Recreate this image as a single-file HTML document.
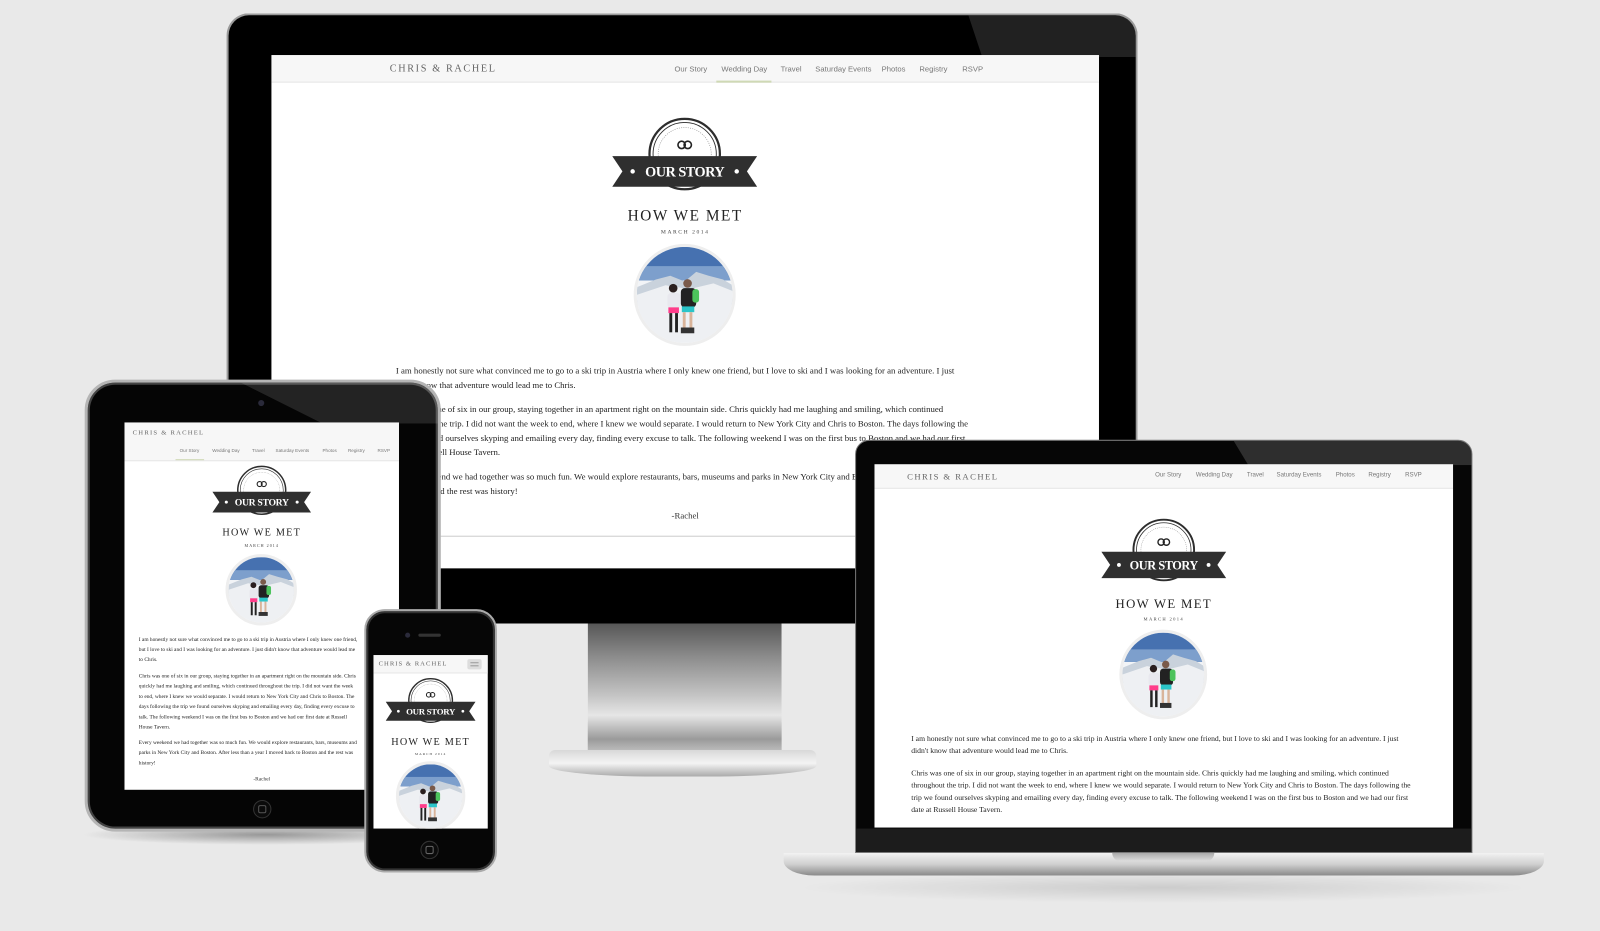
<!DOCTYPE html>
<html><head><meta charset="utf-8"><style>
*{margin:0;padding:0;box-sizing:border-box}
body{width:1600px;height:930px;background:#e9e9e9;position:relative;overflow:hidden;font-family:"Liberation Serif",serif;color:#333}
#w{position:absolute;left:0;top:0;width:1568px;height:912px;transform:scale(1.0204);transform-origin:0 0}
.a{position:absolute}
.scr{position:absolute;background:#fff;overflow:hidden}
.hdr{position:absolute;left:0;top:0;right:0;background:#f7f7f7;border-bottom:1px solid #e6e6e6}
.logo{position:absolute;font-family:"Liberation Serif",serif;color:#666;white-space:nowrap}
.nav{position:absolute;font-family:"Liberation Sans",sans-serif;color:#777;white-space:nowrap}
.t{position:absolute;white-space:nowrap;text-align:center}
.p{position:absolute;white-space:nowrap;color:#222}
.ph{position:absolute;border-radius:50%;overflow:hidden;border:3px solid #eee;background:#fff}
.ph svg{width:100%;height:100%;display:block}
</style></head><body><div id="w">

<div class="a" style="left:80px;top:808px;width:360px;height:20px;background:radial-gradient(ellipse at center,rgba(0,0,0,.35),rgba(0,0,0,0) 70%)"></div>
<div class="a" style="left:780px;top:855px;width:720px;height:30px;background:radial-gradient(ellipse at center,rgba(0,0,0,.12),rgba(0,0,0,0) 70%)"></div>

<!-- MONITOR -->
<div class="a" style="left:576px;top:610px;width:190px;height:130px;background:linear-gradient(#555 0%,#8a8a8a 25%,#c4c4c4 55%,#e6e6e6 70%,#9a9a9a 88%,#c9c9c9 100%);clip-path:polygon(0 0,100% 0,100% 75%,108% 100%,-8% 100%,0 75%)"></div>
<div class="a" style="left:538px;top:735px;width:262px;height:26px;border-radius:6px 6px 40% 40%;background:linear-gradient(#d8d8d8,#f4f4f4 50%,#aaa)"></div>
<div class="a" style="left:222px;top:13px;width:893px;height:598px;border-radius:22px 22px 4px 4px;background:#000;border:2px solid #9a9a9a;border-bottom:0;overflow:hidden">
  <div class="a" style="left:725px;top:0;width:170px;height:41px;background:rgba(255,255,255,.13);clip-path:polygon(0 0,100% 0,100% 100%,8% 100%)"></div>
</div>
<div class="scr" style="left:266px;top:54px;width:811px;height:503px">
  <div class="hdr" style="height:27px"></div>
  <div class="logo" style="left:116px;top:8px;font-size:10px;letter-spacing:1.6px">CHRIS &amp; RACHEL</div>
  <div class="nav" style="top:9px;font-size:7.5px;left:395px">Our Story</div>
  <div class="nav" style="top:9px;font-size:7.5px;left:441px">Wedding Day</div>
  <div class="a" style="left:436px;top:25px;width:54px;height:2px;background:#cfd9b5"></div>
  <div class="nav" style="top:9px;font-size:7.5px;left:499px">Travel</div>
  <div class="nav" style="top:9px;font-size:7.5px;left:533px">Saturday Events</div>
  <div class="nav" style="top:9px;font-size:7.5px;left:598px">Photos</div>
  <div class="nav" style="top:9px;font-size:7.5px;left:635px">Registry</div>
  <div class="nav" style="top:9px;font-size:7.5px;left:677px">RSVP</div>
  <svg class="a" style="left:334px;top:61px" width="142" height="72" viewBox="0 0 142 72"><use href="#badge"/></svg>
  <div class="t" style="left:0;width:811px;top:150px;font-size:15px;letter-spacing:1.5px;color:#222">HOW WE MET</div>
  <div class="t" style="left:0;width:811px;top:171px;font-size:5.5px;letter-spacing:1.5px;color:#444">MARCH 2014</div>
  <div class="ph" style="left:355px;top:185px;width:100px;height:100px"><svg viewBox="0 0 100 100" preserveAspectRatio="none"><use href="#photo"/></svg></div>
  <div class="p" style="left:122px;top:302px;font-size:8.6px;line-height:14px">I am honestly not sure what convinced me to go to a ski trip in Austria where I only knew one friend, but I love to ski and I was looking for an adventure. I just<br>didn't know that adventure would lead me to Chris.</div>
  <div class="p" style="left:122px;top:340px;font-size:8.6px;line-height:14px">Chris was one of six in our group, staying together in an apartment right on the mountain side. Chris quickly had me laughing and smiling, which continued<br>throughout the trip. I did not want the week to end, where I knew we would separate. I would return to New York City and Chris to Boston. The days following the<br>trip we found ourselves skyping and emailing every day, finding every excuse to talk. The following weekend I was on the first bus to Boston and we had our first<br>date at Russell House Tavern.</div>
  <div class="p" style="left:122px;top:406px;font-size:8.6px;line-height:14px">Every weekend we had together was so much fun. We would explore restaurants, bars, museums and parks in New York City and Boston. After less than a year I moved back<br>to Boston and the rest was history!</div>
  <div class="t" style="left:0;width:811px;top:446px;font-size:8.6px">-Rachel</div>
  <div class="a" style="left:122px;top:471px;width:580px;height:1px;background:#ccc"></div>
</div>

<!-- TABLET -->
<div class="a" style="left:83px;top:372px;width:349px;height:443px;border-radius:30px;background:#050505;border:3px solid #b5b5b5;box-shadow:inset 0 0 0 2px #444;overflow:hidden">
  <div class="a" style="left:150px;top:0;width:200px;height:40px;background:rgba(255,255,255,.12);clip-path:polygon(0 0,100% 0,100% 100%,40% 100%)"></div>
</div>
<div class="a" style="left:253px;top:392px;width:6px;height:6px;border-radius:50%;background:#2a2a3a"></div>
<div class="a" style="left:248px;top:784px;width:18px;height:18px;border-radius:50%;border:1px solid #333;background:#0b0b0b"></div>
<div class="a" style="left:253px;top:789px;width:8px;height:8px;border-radius:2px;border:1px solid #555"></div>
<div class="scr" style="left:122px;top:414px;width:269px;height:360px">
  <div class="hdr" style="height:38px"></div>
  <div class="logo" style="left:8px;top:7px;font-size:6.5px;letter-spacing:1.2px">CHRIS &amp; RACHEL</div>
  <div class="nav" style="top:25px;font-size:4.5px;left:54px">Our Story</div>
  <div class="a" style="left:50px;top:36px;width:28px;height:1px;background:#cfd9b5"></div>
  <div class="nav" style="top:25px;font-size:4.5px;left:86px">Wedding Day</div>
  <div class="nav" style="top:25px;font-size:4.5px;left:125px">Travel</div>
  <div class="nav" style="top:25px;font-size:4.5px;left:148px">Saturday Events</div>
  <div class="nav" style="top:25px;font-size:4.5px;left:194px">Photos</div>
  <div class="nav" style="top:25px;font-size:4.5px;left:219px">Registry</div>
  <div class="nav" style="top:25px;font-size:4.5px;left:248px">RSVP</div>
  <svg class="a" style="left:86px;top:42px" width="97" height="49" viewBox="0 0 142 72"><use href="#badge"/></svg>
  <div class="t" style="left:0;width:269px;top:103px;font-size:10px;letter-spacing:1.2px;color:#222">HOW WE MET</div>
  <div class="t" style="left:0;width:269px;top:118px;font-size:4px;letter-spacing:1px;color:#444">MARCH 2014</div>
  <div class="ph" style="left:99px;top:129px;width:70px;height:70px"><svg viewBox="0 0 100 100" preserveAspectRatio="none"><use href="#photo"/></svg></div>
  <div class="p" style="left:14px;top:208px;font-size:5.3px;line-height:10px">I am honestly not sure what convinced me to go to a ski trip in Austria where I only knew one friend,<br>but I love to ski and I was looking for an adventure. I just didn't know that adventure would lead me<br>to Chris.</div>
  <div class="p" style="left:14px;top:244px;font-size:5.3px;line-height:10px">Chris was one of six in our group, staying together in an apartment right on the mountain side. Chris<br>quickly had me laughing and smiling, which continued throughout the trip. I did not want the week<br>to end, where I knew we would separate. I would return to New York City and Chris to Boston. The<br>days following the trip we found ourselves skyping and emailing every day, finding every excuse to<br>talk. The following weekend I was on the first bus to Boston and we had our first date at Russell<br>House Tavern.</div>
  <div class="p" style="left:14px;top:309px;font-size:5.3px;line-height:10px">Every weekend we had together was so much fun. We would explore restaurants, bars, museums and<br>parks in New York City and Boston. After less than a year I moved back to Boston and the rest was<br>history!</div>
  <div class="t" style="left:0;width:269px;top:347px;font-size:5.3px">-Rachel</div>
</div>

<!-- PHONE -->
<div class="a" style="left:357px;top:597px;width:130px;height:258px;border-radius:20px;background:#060606;border:2px solid #aaa;box-shadow:inset 0 0 0 2px #333"></div>
<div class="a" style="left:397px;top:620px;width:5px;height:5px;border-radius:50%;background:#2a2a3a"></div>
<div class="a" style="left:410px;top:621px;width:22px;height:3px;border-radius:2px;background:#333"></div>
<div class="a" style="left:412px;top:824px;width:18px;height:18px;border-radius:50%;border:1px solid #333;background:#0b0b0b"></div>
<div class="a" style="left:417px;top:829px;width:8px;height:8px;border-radius:2px;border:1px solid #666"></div>
<div class="scr" style="left:366px;top:642px;width:112px;height:170px">
  <div class="hdr" style="height:18px"></div>
  <div class="logo" style="left:5px;top:5px;font-size:6.5px;letter-spacing:1px">CHRIS &amp; RACHEL</div>
  <div class="a" style="left:92px;top:4px;width:14px;height:10px;background:#ddd;border-radius:2px"></div>
  <div class="a" style="left:95px;top:7px;width:8px;height:4px;border-top:1px solid #999;border-bottom:1px solid #999"></div>
  <svg class="a" style="left:12px;top:22px" width="88" height="45" viewBox="0 0 142 72"><use href="#badge"/></svg>
  <div class="t" style="left:0;width:112px;top:80px;font-size:10px;letter-spacing:1.2px;color:#222">HOW WE MET</div>
  <div class="t" style="left:0;width:112px;top:95px;font-size:3.5px;letter-spacing:1px;color:#444">MARCH 2014</div>
  <div class="ph" style="left:22px;top:104px;width:68px;height:68px"><svg viewBox="0 0 100 100" preserveAspectRatio="none"><use href="#photo"/></svg></div>
</div>

<!-- LAPTOP -->
<div class="a" style="left:838px;top:431px;width:605px;height:405px;border-radius:14px 14px 0 0;background:#060606;border:1px solid #777;overflow:hidden">
  <div class="a" style="left:370px;top:0;width:240px;height:24px;background:rgba(255,255,255,.16);clip-path:polygon(0 0,100% 0,100% 100%,6% 100%)"></div>
  <div class="a" style="left:0;top:380px;width:605px;height:25px;background:#1c1c1c"></div>
</div>
<div class="a" style="left:768px;top:836px;width:745px;height:22px;border-radius:0 0 30px 30px/0 0 14px 14px;background:linear-gradient(#f2f2f2,#cfcfcf 50%,#8a8a8a)"></div>
<div class="a" style="left:1090px;top:836px;width:100px;height:8px;border-radius:0 0 8px 8px;background:linear-gradient(#aaa,#dedede)"></div>
<div class="scr" style="left:857px;top:455px;width:567px;height:356px">
  <div class="hdr" style="height:24px"></div>
  <div class="logo" style="left:32px;top:7px;font-size:8.5px;letter-spacing:1.4px">CHRIS &amp; RACHEL</div>
  <div class="nav" style="top:8px;font-size:6px;left:275px">Our Story</div>
  <div class="nav" style="top:8px;font-size:6px;left:315px">Wedding Day</div>
  <div class="nav" style="top:8px;font-size:6px;left:365px">Travel</div>
  <div class="nav" style="top:8px;font-size:6px;left:394px">Saturday Events</div>
  <div class="nav" style="top:8px;font-size:6px;left:452px">Photos</div>
  <div class="nav" style="top:8px;font-size:6px;left:484px">Registry</div>
  <div class="nav" style="top:8px;font-size:6px;left:520px">RSVP</div>
  <svg class="a" style="left:222px;top:53px" width="123" height="62" viewBox="0 0 142 72"><use href="#badge"/></svg>
  <div class="t" style="left:0;width:567px;top:130px;font-size:12.5px;letter-spacing:1.3px;color:#222">HOW WE MET</div>
  <div class="t" style="left:0;width:567px;top:149px;font-size:4.5px;letter-spacing:1.3px;color:#444">MARCH 2014</div>
  <div class="ph" style="left:240px;top:162px;width:86px;height:88px"><svg viewBox="0 0 100 100" preserveAspectRatio="none"><use href="#photo"/></svg></div>
  <div class="p" style="left:36px;top:263px;font-size:7.5px;line-height:12px">I am honestly not sure what convinced me to go to a ski trip in Austria where I only knew one friend, but I love to ski and I was looking for an adventure. I just<br>didn't know that adventure would lead me to Chris.</div>
  <div class="p" style="left:36px;top:297px;font-size:7.5px;line-height:12px">Chris was one of six in our group, staying together in an apartment right on the mountain side. Chris quickly had me laughing and smiling, which continued<br>throughout the trip. I did not want the week to end, where I knew we would separate. I would return to New York City and Chris to Boston. The days following the<br>trip we found ourselves skyping and emailing every day, finding every excuse to talk. The following weekend I was on the first bus to Boston and we had our first<br>date at Russell House Tavern.</div>
</div>
</div>

<svg width="0" height="0" style="position:absolute">
  <defs>
    <g id="badge">
      <circle cx="71" cy="36" r="34.5" fill="#fff" stroke="#2d2d2d" stroke-width="2.2"/>
      <circle cx="71" cy="36" r="31" fill="none" stroke="#2d2d2d" stroke-width="0.9"/>
      <circle cx="71" cy="36" r="26" fill="none" stroke="#888" stroke-width="0.6" stroke-dasharray="1 1.2"/>
      <circle cx="68" cy="27" r="3.6" fill="none" stroke="#222" stroke-width="1.6"/>
      <circle cx="74" cy="27" r="3.6" fill="none" stroke="#222" stroke-width="1.6"/>
      <polygon points="0,38 142,38 132,53 142,68 0,68 10,53" fill="#2f2f2f"/>
      <circle cx="20" cy="53" r="2.2" fill="#fff"/>
      <circle cx="122" cy="53" r="2.2" fill="#fff"/>
      <text x="71" y="58" text-anchor="middle" font-family="Liberation Serif,serif" font-weight="bold" font-size="14" fill="#fff" letter-spacing="-0.5">OUR STORY</text>
    </g>
    <g id="photo">
      <rect width="100" height="100" fill="#f2f4f7"/>
      <rect width="100" height="35" fill="#4671b0"/>
      <rect y="20" width="100" height="15" fill="#7d9fcc"/>
      <polygon points="0,42 20,34 35,30 50,36 62,26 75,30 90,34 100,40 100,60 0,60" fill="#c9d2dc"/>
      <polygon points="0,50 30,40 55,44 80,38 100,46 100,100 0,100" fill="#eef0f3"/>
      <rect x="32" y="48" width="14" height="16" rx="4" fill="#e8e8ee"/>
      <circle cx="38" cy="43" r="4.5" fill="#2a1f1f"/>
      <rect x="33" y="63" width="11" height="6" fill="#ff3c8a"/>
      <rect x="34" y="69" width="3" height="20" fill="#222"/>
      <rect x="40" y="69" width="3" height="20" fill="#222"/>
      <circle cx="53" cy="38" r="4.5" fill="#7a5a4a"/>
      <rect x="46" y="43" width="16" height="20" rx="4" fill="#222"/>
      <rect x="58" y="44" width="7" height="14" rx="3" fill="#4cc35c"/>
      <rect x="47" y="62" width="13" height="6" fill="#2bc5c8"/>
      <rect x="48" y="68" width="3" height="20" fill="#d9b49a"/>
      <rect x="55" y="68" width="3" height="20" fill="#d9b49a"/>
      <rect x="46" y="84" width="14" height="6" fill="#333"/>
    </g>
  </defs>
</svg>
</body></html>
